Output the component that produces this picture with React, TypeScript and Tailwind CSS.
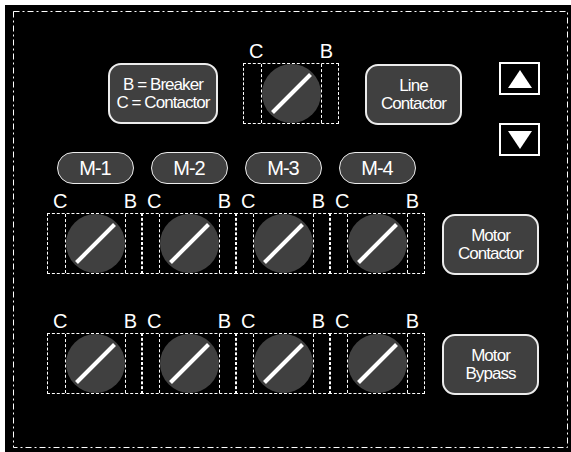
import React from "react";

const font = "font-['Liberation_Sans',Arial,sans-serif]";

const Knob = () => (
  <svg width="59" height="59" viewBox="0 0 59 59" className="block">
    <circle cx="29.5" cy="29.5" r="29.5" fill="#404040" />
    <line x1="10.5" y1="48.5" x2="48.5" y2="10.5" stroke="#ffffff" strokeWidth="4" />
  </svg>
);

// dashed C/B selector box with the knob in the middle
const Selector = () => (
  <div className="w-[96px]">
    <div className="flex h-[21px] justify-between px-[6px] text-[20px] leading-[19px] text-white">
      <span>C</span>
      <span>B</span>
    </div>
    <div className="h-[61px] border border-dashed border-white">
      <div className="mx-auto h-full w-[61px] border-x border-dashed border-white">
        <Knob />
      </div>
    </div>
  </div>
);

const PanelButton = ({
  lines,
  className,
}: {
  lines: string[];
  className: string;
}) => (
  <div
    className={`flex flex-col items-center justify-center rounded-[13px] border-2 border-[#ececec] bg-[#404040] text-center text-[17px] leading-[18px] tracking-[-0.95px] text-white ${className}`}
  >
    {lines.map((l) => (
      <span key={l}>{l}</span>
    ))}
  </div>
);

const ArrowBox = ({ up }: { up: boolean }) => (
  <div className="flex h-[33px] w-[41px] items-center justify-center border-2 border-white">
    <svg width="24" height="18" viewBox="0 0 24 18">
      {up ? (
        <polygon points="12,0 24,18 0,18" fill="#ffffff" />
      ) : (
        <polygon points="0,0 24,0 12,18" fill="#ffffff" />
      )}
    </svg>
  </div>
);

const motors = ["M-1", "M-2", "M-3", "M-4"];

export default function App() {
  return (
    <div
      className={`ml-[5px] mt-[5px] h-[447px] w-[566px] overflow-hidden bg-black pl-[8px] pt-[6px] ${font}`}
    >
      <div className="relative h-[437px] w-[555px]">
        {/* dash-dot outline of the panel */}
        <svg
          className="pointer-events-none absolute inset-0"
          width="555"
          height="437"
        >
          <rect
            x="0.5"
            y="0.5"
            width="554"
            height="436"
            fill="none"
            stroke="#ffffff"
            strokeWidth="1"
            strokeDasharray="6 3 2 3"
          />
        </svg>

        {/* top row */}
        <div className="flex h-[141px] items-start pt-[31px]">
          <PanelButton
            lines={["B = Breaker", "C = Contactor"]}
            className="ml-[95px] mt-[21px] h-[61px] w-[110px]"
          />
          <div className="ml-[25px]">
            <Selector />
          </div>
          <PanelButton
            lines={["Line", "Contactor"]}
            className="ml-[26px] mt-[22px] h-[61px] w-[97px]"
          />
          <div className="ml-[37px] mt-[20px] flex flex-col gap-[28px]">
            <ArrowBox up />
            <ArrowBox up={false} />
          </div>
        </div>

        {/* motor section */}
        <div className="flex items-start">
          <div className="ml-[34px] flex">
            {motors.map((m, i) => (
              <div key={m} className={`w-[96px] ${i > 0 ? "-ml-[2px]" : ""}`}>
                <div className="mx-auto flex h-[32px] w-[77px] items-center justify-center rounded-full border-[1.5px] border-[#ececec] bg-[#404040] text-[20px] tracking-[-1px] text-white">
                  {m}
                </div>
                <div className="mt-[8px]">
                  <Selector />
                </div>
                <div className="mt-[38px]">
                  <Selector />
                </div>
              </div>
            ))}
          </div>
          <div className="ml-[17px] flex flex-col">
            <PanelButton
              lines={["Motor", "Contactor"]}
              className="mt-[62px] h-[61px] w-[97px]"
            />
            <PanelButton
              lines={["Motor", "Bypass"]}
              className="mt-[59px] h-[61px] w-[97px]"
            />
          </div>
        </div>
      </div>
    </div>
  );
}
